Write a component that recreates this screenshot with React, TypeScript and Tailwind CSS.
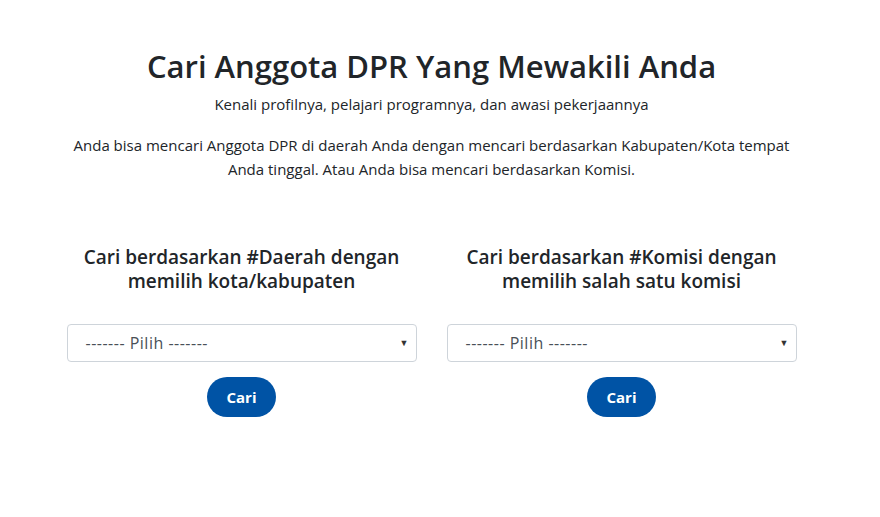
import React from 'react';

const font = { fontFamily: '"Open Sans", "Noto Sans", sans-serif' };

function SearchColumn({ title }: { title: React.ReactNode }) {
  return (
    <div className="w-[380px] px-[15px] flex flex-col items-center">
      <h3 className="text-[19px] leading-[24px] font-semibold text-[#212529] text-center px-4 h-[48px]">{title}</h3>
      <div className="mt-[31px] w-[350px] h-[38px] border border-[#ced4da] rounded-[4px] bg-white flex items-center justify-between pl-[18px] pr-[7px]">
        <span className="text-[16px] tracking-[0.5px] text-[#495057]">------- Pilih -------</span>
        <span className="text-[9px] text-[#333]">▼</span>
      </div>
      <button className="mt-[15px] w-[69px] h-[40px] rounded-full bg-[#0053a5] text-white font-bold text-[15px]">Cari</button>
    </div>
  );
}

export default function App() {
  return (
    <div className="w-full min-h-[517px] bg-white" style={font}>
      <div className="w-[863px] flex flex-col items-center pt-[44px]">
        <h1 className="text-[31px] leading-[44px] font-semibold text-[#212529]">Cari Anggota DPR Yang Mewakili Anda</h1>
        <p className="text-[15px] leading-[22px] text-[#212529] mt-[5px]">Kenali profilnya, pelajari programnya, dan awasi pekerjaannya</p>
        <p className="text-[15px] leading-[24px] text-[#212529] text-center w-[740px] mt-[18px]">
          Anda bisa mencari Anggota DPR di daerah Anda dengan mencari berdasarkan Kabupaten/Kota tempat Anda tinggal. Atau Anda bisa mencari berdasarkan Komisi.
        </p>
        <div className="flex w-[760px] mt-[64px]">
          <SearchColumn title={<>Cari berdasarkan #Daerah dengan memilih kota/kabupaten</>} />
          <SearchColumn title={<>Cari berdasarkan #Komisi dengan memilih salah satu komisi</>} />
        </div>
      </div>
    </div>
  );
}
